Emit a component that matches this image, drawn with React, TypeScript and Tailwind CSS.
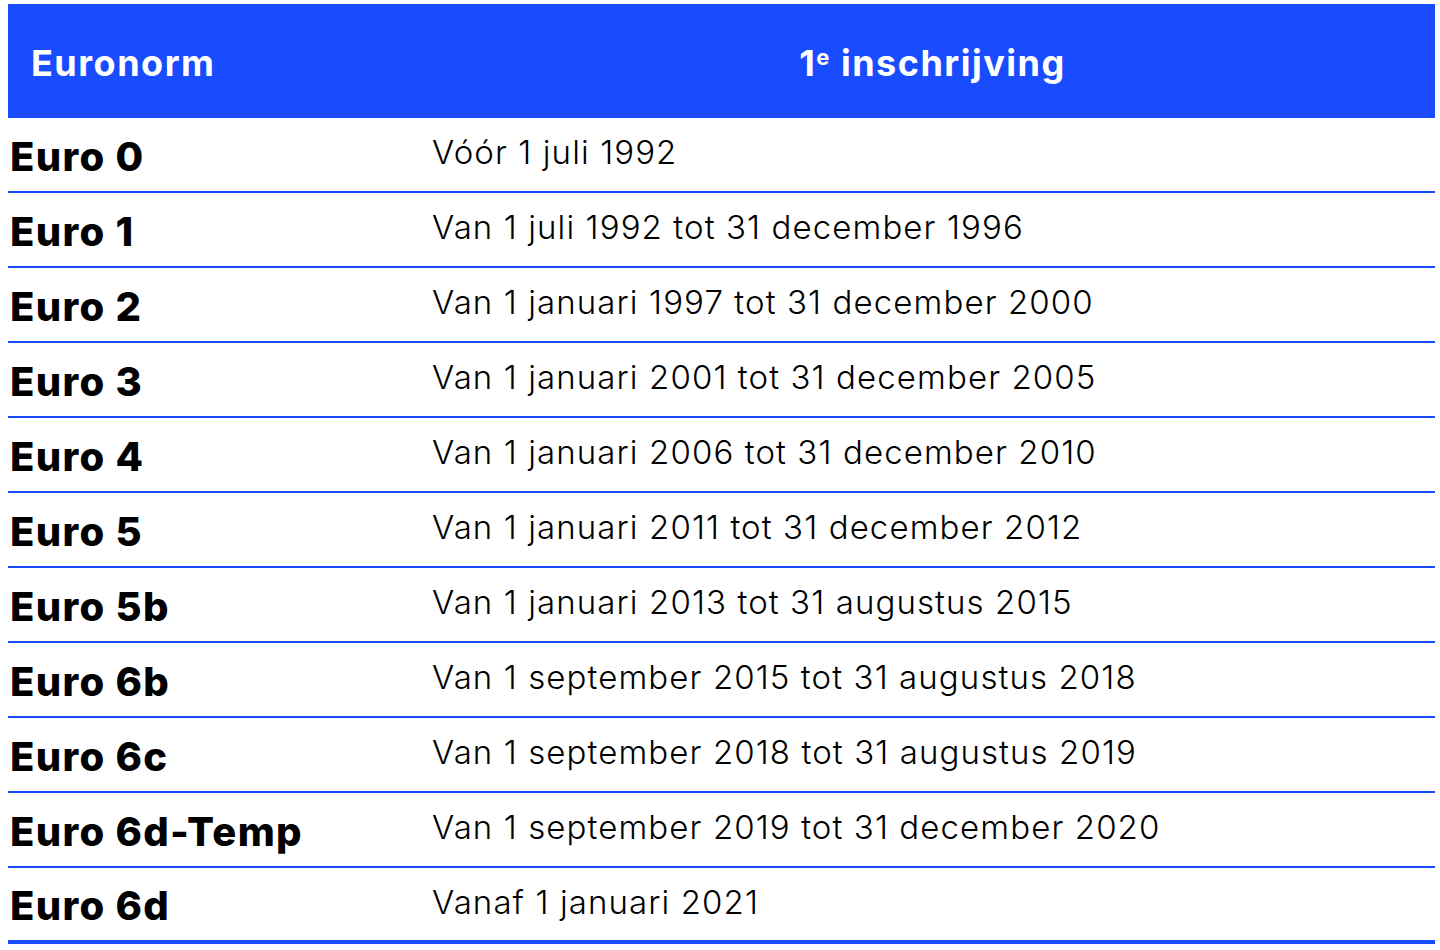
const rows: [string, string][] = [
  ["Euro 0", "Vóór 1 juli 1992"],
  ["Euro 1", "Van 1 juli 1992 tot 31 december 1996"],
  ["Euro 2", "Van 1 januari 1997 tot 31 december 2000"],
  ["Euro 3", "Van 1 januari 2001 tot 31 december 2005"],
  ["Euro 4", "Van 1 januari 2006 tot 31 december 2010"],
  ["Euro 5", "Van 1 januari 2011 tot 31 december 2012"],
  ["Euro 5b", "Van 1 januari 2013 tot 31 augustus 2015"],
  ["Euro 6b", "Van 1 september 2015 tot 31 augustus 2018"],
  ["Euro 6c", "Van 1 september 2018 tot 31 augustus 2019"],
  ["Euro 6d-Temp", "Van 1 september 2019 tot 31 december 2020"],
  ["Euro 6d", "Vanaf 1 januari 2021"],
]

export default function App() {
  return (
    <div className="min-h-[950px] bg-white pt-[4px] pl-[8px] pr-[5px] font-['Inter',sans-serif]">
      <div className="grid grid-cols-[422px_1fr] h-[114px] bg-[#1a4cff] text-white font-bold text-[36px] tracking-[1.5px]">
        <div className="flex items-center pl-[23px] pt-[3px]">Euronorm</div>
        <div className="flex items-center justify-center pt-[3px]">
          <span>
            1<sup className="text-[22px] font-bold">e</sup> inschrijving
          </span>
        </div>
      </div>
      {rows.map(([norm, date], i) => (
        <div
          key={norm}
          className={`grid grid-cols-[422px_1fr] ${
            i === rows.length - 1
              ? "h-[76px] border-b-[4px]"
              : "h-[75px] border-b-[2px]"
          } border-[#1a4cff]`}
        >
          <div className="flex items-center pl-[2px] pt-[4px] text-[40px] font-extrabold tracking-[1.3px] text-black">
            {norm}
          </div>
          <div className="flex items-center pl-[2px] pb-[3px] text-[33px] font-light tracking-[1.1px] text-black">
            {date}
          </div>
        </div>
      ))}
    </div>
  )
}
